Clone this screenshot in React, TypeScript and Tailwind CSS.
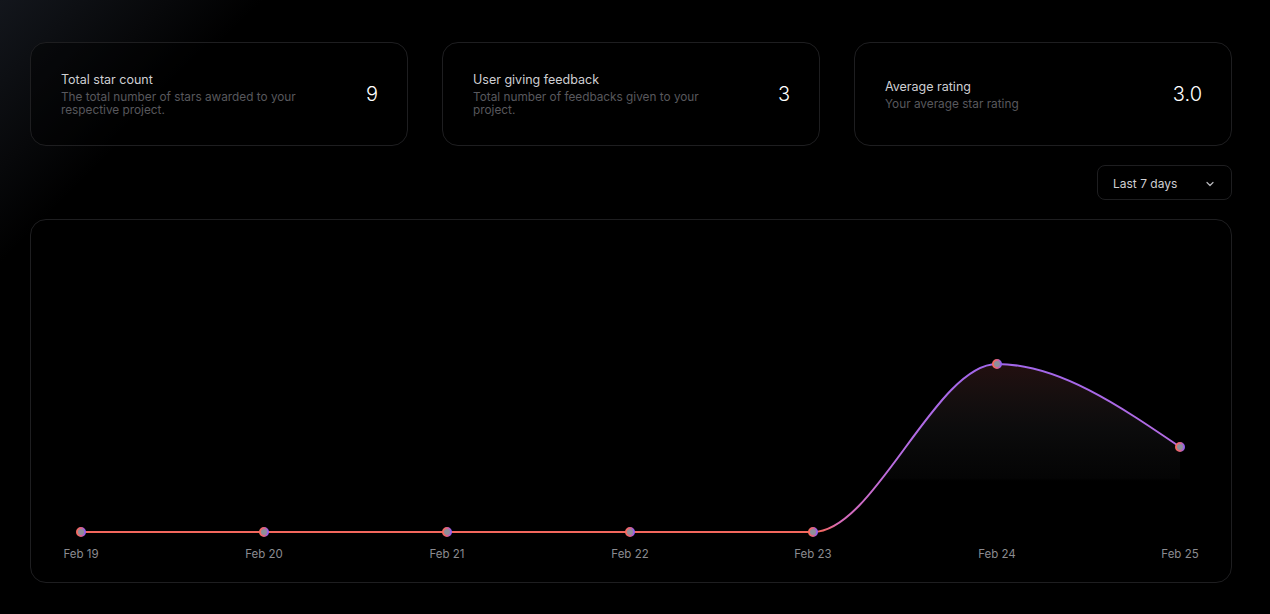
import React from "react";

const stats = [
  { title: "Total star count", desc: "The total number of stars awarded to your respective project.", value: "9" },
  { title: "User giving feedback", desc: "Total number of feedbacks given to your project.", value: "3" },
  { title: "Average rating", desc: "Your average star rating", value: "3.0" },
];

const labels = ["Feb 19", "Feb 20", "Feb 21", "Feb 22", "Feb 23", "Feb 24", "Feb 25"];
const xs = [50, 233, 416, 599, 782, 966, 1149];
const ys = [312, 312, 312, 312, 312, 144, 227];

function sign(v: number) {
  return v < 0 ? -1 : 1;
}

function monotonePath(px: number[], py: number[]) {
  const n = px.length;
  const t: number[] = new Array(n).fill(0);
  for (let i = 1; i < n - 1; i++) {
    const h0 = px[i] - px[i - 1];
    const h1 = px[i + 1] - px[i];
    const s0 = (py[i] - py[i - 1]) / h0;
    const s1 = (py[i + 1] - py[i]) / h1;
    const p = (s0 * h1 + s1 * h0) / (h0 + h1);
    t[i] = (sign(s0) + sign(s1)) * Math.min(Math.abs(s0), Math.abs(s1), 0.5 * Math.abs(p)) || 0;
  }
  {
    const h = px[1] - px[0];
    t[0] = (3 * (py[1] - py[0]) / h - t[1]) / 2;
    const h2 = px[n - 1] - px[n - 2];
    t[n - 1] = (3 * (py[n - 1] - py[n - 2]) / h2 - t[n - 2]) / 2;
  }
  let d = `M${px[0]},${py[0]}`;
  for (let i = 0; i < n - 1; i++) {
    const dx = (px[i + 1] - px[i]) / 3;
    d += ` C${px[i] + dx},${py[i] + dx * t[i]} ${px[i + 1] - dx},${py[i + 1] - dx * t[i + 1]} ${px[i + 1]},${py[i + 1]}`;
  }
  return d;
}

const linePath = monotonePath(xs, ys);
const areaPath = `${linePath} L${xs[xs.length - 1]},312 L${xs[0]},312 Z`;

export default function App() {
  return (
    <div
      className="min-h-[614px] w-full bg-black bg-[linear-gradient(135deg,#13161c_0%,#07080a_9%,#000000_14%)] pl-[30px] pr-[38px] pt-[42px] text-white"
      style={{ fontFamily: "Inter, 'Noto Sans', sans-serif" }}
    >
      <div className="grid grid-cols-3 gap-[34px]">
        {stats.map((s) => (
          <div
            key={s.title}
            className="flex h-[104px] items-center justify-between rounded-2xl border border-[#1e1e20] bg-black/40 pl-[30px] pr-[29px]"
          >
            <div className="flex flex-col">
              <div className="text-[12.5px] leading-[17px] text-[#cfcfd3]">{s.title}</div>
              <div className="mt-[3px] max-w-[245px] text-[11.8px] leading-[13px] text-[#58585d]">{s.desc}</div>
            </div>
            <div className="text-[20px] font-light text-white">{s.value}</div>
          </div>
        ))}
      </div>

      <div className="mt-[19px] flex justify-end">
        <button className="flex h-[35px] w-[135px] items-center justify-between rounded-lg border border-[#1e1e20] bg-black pl-[15px] pr-[16px] pt-[2px] text-[12px] text-[#cfcfd3]">
          <span>Last 7 days</span>
          <svg width="10" height="10" viewBox="0 0 10 10" fill="none">
            <path d="M2 3.5 L5 6.5 L8 3.5" stroke="#b8b8bd" strokeWidth="1.2" strokeLinecap="round" strokeLinejoin="round" />
          </svg>
        </button>
      </div>

      <div className="mt-[19px] h-[364px] rounded-2xl border border-[#1e1e20] bg-black">
        <svg width="1200" height="362" viewBox="0 0 1200 362" className="block">
          <defs>
            <linearGradient id="area" x1="0" y1="144" x2="0" y2="312" gradientUnits="userSpaceOnUse">
              <stop offset="0" stopColor="#f87171" stopOpacity="0.14" />
              <stop offset="0.4" stopColor="#a1a1aa" stopOpacity="0.07" />
              <stop offset="0.68" stopColor="#71717a" stopOpacity="0.04" />
              <stop offset="0.7" stopColor="#000000" stopOpacity="0" />
            </linearGradient>
            <linearGradient id="line" x1="0" y1="144" x2="0" y2="312" gradientUnits="userSpaceOnUse">
              <stop offset="0" stopColor="#a267ea" />
              <stop offset="0.6" stopColor="#b86ce0" />
              <stop offset="0.95" stopColor="#d76bb8" />
              <stop offset="1" stopColor="#f4675a" />
            </linearGradient>
            <linearGradient id="dot" x1="0" y1="0" x2="1" y2="0">
              <stop offset="0" stopColor="#f56b5e" />
              <stop offset="0.5" stopColor="#e06480" />
              <stop offset="1" stopColor="#8f5ff0" />
            </linearGradient>
          </defs>
          <path d={areaPath} fill="url(#area)" />
          <path d={linePath} fill="none" stroke="url(#line)" strokeWidth="2" />
          {xs.map((x, i) => (
            <circle key={i} cx={x} cy={ys[i]} r="4" fill="#8e8e9a" stroke="url(#dot)" strokeWidth="2" />
          ))}
          {labels.map((l, i) => (
            <text
              key={l}
              x={xs[i]}
              y={338}
              textAnchor="middle"
              fontSize="11.5"
              fill="#8b8b90"
              fontFamily="Inter, 'Noto Sans', sans-serif"
            >
              {l}
            </text>
          ))}
        </svg>
      </div>
    </div>
  );
}
